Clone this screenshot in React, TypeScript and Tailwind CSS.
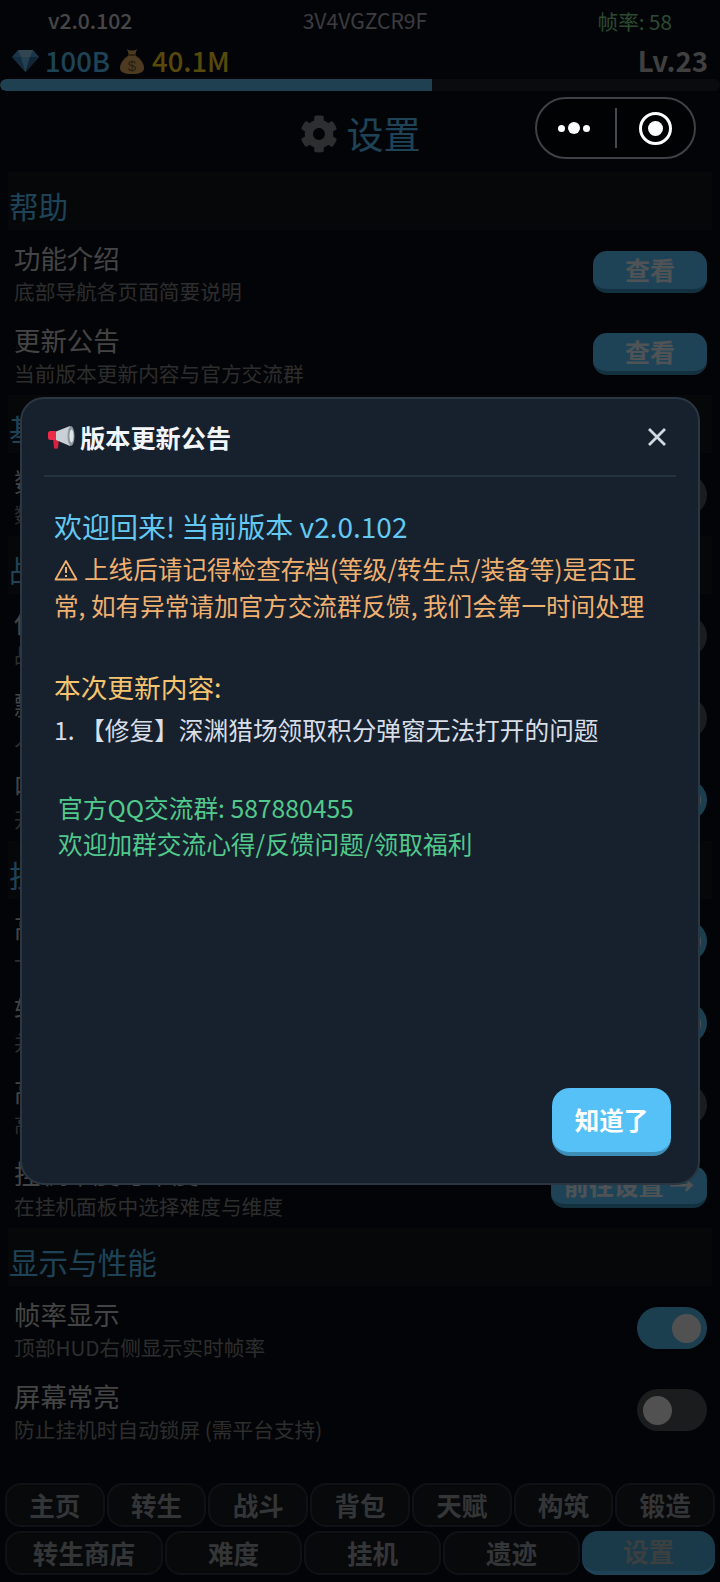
import { FaCog } from "react-icons/fa";

const FONT = "font-['Noto_Sans_CJK_SC','Noto_Sans',sans-serif]";

function Toggle({ on }: { on: boolean }) {
  return (
    <div className={`w-[70px] h-[42px] rounded-full flex items-center px-[6px] ${on ? "bg-[#52b4e2] justify-end" : "bg-[#4a5058] justify-start"}`}>
      <div className="w-[29px] h-[29px] rounded-full bg-[#e8e8e8]" />
    </div>
  );
}

function Btn({ label, wide }: { label: string; wide?: boolean }) {
  return (
    <div className={`h-[42px] rounded-[14px] bg-[#56c1f7] border-b-[4px] border-[#3a8db8] flex items-center justify-center text-[24.96px] font-bold text-[#e4eef2] ${wide ? "w-[156px]" : "w-[114px]"}`}>
      {label}
    </div>
  );
}

type Row = { title: string; sub: string; toggle?: boolean; btn?: string };

function SettingRow({ r }: { r: Row }) {
  return (
    <div className="h-[70px] pl-[14px] pr-[13px] flex justify-between items-start">
      <div className="flex flex-col -mt-[2px]">
        <div className="text-[26.4px] leading-[36px] text-[#c4c4c4]">{r.title}</div>
        <div className="text-[20.7px] leading-[30px] text-[#808080]">{r.sub}</div>
      </div>
      <div className="mt-[9px] flex shrink-0">
        {r.btn ? <Btn label={r.btn} wide={r.btn.length > 2} /> : <Toggle on={!!r.toggle} />}
      </div>
    </div>
  );
}

function Section({ title, rows }: { title: string; rows: Row[] }) {
  return (
    <div className="flex flex-col mb-[1px]">
      <div className="h-[58px] mx-[8px] pl-[1px] pt-[11px] bg-[#10141b] flex items-center text-[29.6px] text-[#56c1f7]">{title}</div>
      <div className="flex flex-col gap-[12px] pt-[12px]">
        {rows.map((r) => (
          <SettingRow key={r.title} r={r} />
        ))}
      </div>
    </div>
  );
}

const sections: { title: string; rows: Row[] }[] = [
  {
    title: "帮助",
    rows: [
      { title: "功能介绍", sub: "底部导航各页面简要说明", btn: "查看" },
      { title: "更新公告", sub: "当前版本更新内容与官方交流群", btn: "查看" },
    ],
  },
  { title: "基础设置", rows: [{ title: "数字格式", sub: "数值显示为缩写", toggle: false }] },
  {
    title: "战斗设置",
    rows: [
      { title: "伤害显示", sub: "战斗中显示伤害数字", toggle: false },
      { title: "飘字效果", sub: "入场时显示飘字动画", toggle: false },
      { title: "叫阵提示", sub: "开启后显示战斗提示", toggle: true },
    ],
  },
  {
    title: "挂机设置",
    rows: [
      { title: "高级挂机", sub: "一键开启自动战斗", toggle: true },
      { title: "转生提示", sub: "并在转生时发出提醒", toggle: true },
      { title: "高速模式", sub: "高速模式下跳过动画", toggle: false },
      { title: "挂机难度与维度", sub: "在挂机面板中选择难度与维度", btn: "前往设置 →" },
    ],
  },
  {
    title: "显示与性能",
    rows: [
      { title: "帧率显示", sub: "顶部HUD右侧显示实时帧率", toggle: true },
      { title: "屏幕常亮", sub: "防止挂机时自动锁屏 (需平台支持)", toggle: false },
    ],
  },
];

const nav1 = ["主页", "转生", "战斗", "背包", "天赋", "构筑", "锻造"];
const nav2 = ["转生商店", "难度", "挂机", "遗迹", "设置"];

function NavBtn({ label, active, cls }: { label: string; active?: boolean; cls: string }) {
  return (
    <div
      className={`${cls} h-[44px] rounded-[16px] flex items-center justify-center text-[25.6px] font-bold ${
        active ? "bg-[#4aa6d4] border-b-[4px] border-[#56c1f7] text-[#a8b4b8]" : "bg-[#141a22] border-[2px] border-[#2a323c] text-[#94979a]"
      }`}
    >
      {label}
    </div>
  );
}

function Diamond() {
  return (
    <svg width="27" height="22" viewBox="0 0 27 22" className="shrink-0">
      <path d="M6 0H21L27 7L13.5 22L0 7Z" fill="#4f9ad0" />
      <path d="M6 0L9 7H18L21 0Z" fill="#8cc6ee" />
      <path d="M0 7H9L13.5 22Z" fill="#3b7fb4" />
      <path d="M9 7H18L13.5 22Z" fill="#6bb2e4" />
      <path d="M18 7H27L13.5 22Z" fill="#2f6a9c" />
    </svg>
  );
}

function Bag() {
  return (
    <svg width="26" height="26" viewBox="0 0 26 26" className="shrink-0">
      <path d="M8 1C10 3 16 3 18 1L16 7H10Z" fill="#d9a860" />
      <path d="M9.5 7.5H16.5C22 11 25 16 25 20C25 24 21 26 13 26C5 26 1 24 1 20C1 16 4 11 9.5 7.5Z" fill="#d9a860" />
      <rect x="9" y="6" width="8" height="2" fill="#8a6530" />
      <text x="13" y="23" textAnchor="middle" fontSize="15" fill="#7a5a2c" fontFamily="Liberation Sans, sans-serif">$</text>
    </svg>
  );
}

function Megaphone() {
  return (
    <svg width="27" height="24" viewBox="0 0 27 24">
      <path d="M5 13H11L10 23C10 24 6 24 6 23Z" fill="#d8213f" />
      <rect x="0" y="6" width="9" height="9" rx="2.5" fill="#ee2b47" />
      <path d="M8 6.5L22 1V21L8 15Z" fill="#c9d1d6" />
      <ellipse cx="23" cy="11" rx="3.5" ry="10" fill="#8d989f" />
      <ellipse cx="23.5" cy="11" rx="2" ry="6.5" fill="#dfe5e8" />
    </svg>
  );
}

export default function App() {
  return (
    <div className={`relative w-[720px] h-[1582px] overflow-hidden bg-[#0b0e14] ${FONT}`}>
      {/* page */}
      <div className="flex flex-col h-full">
        <div className="h-[42px] px-[48px] flex items-center justify-between text-[21.12px]">
          <span className="font-medium text-[#c8c8d0]">v2.0.102</span>
          <span className="text-[#a8a8b8]">3V4VGZCR9F</span>
          <span className="text-[#7fd090] text-[20.6px]">帧率: 58</span>
        </div>
        <div className="h-[37px] pl-[12px] pr-[12px] flex items-center justify-between">
          <div className="flex items-center text-[27.4px] font-medium">
            <Diamond />
            <span className="ml-[6px] text-[#56c1f7]">100B</span>
            <span className="ml-[9px]"><Bag /></span>
            <span className="ml-[7px] text-[#f5d020]">40.1M</span>
          </div>
          <span className="text-[27.6px] font-bold text-[#b8b8b8]">Lv.23</span>
        </div>
        <div className="h-[12px] bg-[#1d2229] rounded-full overflow-hidden">
          <div className="h-full w-[432px] bg-[#56b8e4] rounded-l-full" />
        </div>
        <div className="h-[81px] pt-[5px] flex items-center justify-center">
          <FaCog className="text-[38px] text-[#7f8488]" />
          <span className="ml-[9px] text-[37px] text-[#56c1f7]">设置</span>
        </div>
        {sections.map((s) => (
          <Section key={s.title} title={s.title} rows={s.rows} />
        ))}
        <div className="mt-auto pb-[7px] flex flex-col gap-[4px] px-[5px]">
          <div className="flex gap-[2px]">
            {nav1.map((n) => (
              <NavBtn key={n} label={n} cls="flex-1" />
            ))}
          </div>
          <div className="flex gap-[2px]">
            {nav2.map((n, i) => (
              <NavBtn key={n} label={n} active={n === "设置"} cls={i === 0 ? "w-[158px]" : "flex-1"} />
            ))}
          </div>
        </div>
      </div>

      {/* dim overlay */}
      <div className="absolute inset-0 bg-black/65" />

      {/* capsule */}
      <div className="absolute left-[535px] top-[97px] w-[161px] h-[62px] rounded-full border-[2px] border-[#3f4144] bg-black/40 flex items-center">
        <div className="w-[78px] pr-[4px] flex items-center justify-center gap-[3px]">
          <span className="w-[7px] h-[7px] rounded-full bg-white" />
          <span className="w-[12px] h-[12px] rounded-full bg-white" />
          <span className="w-[7px] h-[7px] rounded-full bg-white" />
        </div>
        <div className="w-[2px] h-[40px] bg-[#46484b]" />
        <div className="flex-1 flex items-center justify-center">
          <div className="w-[33px] h-[33px] rounded-full border-[3px] border-white flex items-center justify-center">
            <div className="w-[15px] h-[15px] rounded-full bg-white" />
          </div>
        </div>
      </div>

      {/* modal */}
      <div className="absolute left-[20px] top-[397px] w-[680px] h-[788px] rounded-[24px] bg-[#17212d] border-[2px] border-[#2a3642] flex flex-col">
        <div className="mx-[22px] h-[78px] shrink-0 border-b-[2px] border-[#253240] flex items-center justify-between">
          <div className="flex items-center pl-[4px] pt-[1px]">
            <Megaphone />
            <span className="ml-[5px] text-[25.2px] font-bold text-[#f2f6fa]">版本更新公告</span>
          </div>
          <svg width="20" height="20" viewBox="0 0 20 20" className="mr-[9px]">
            <path d="M2 2L18 18M18 2L2 18" stroke="#d0d8e0" strokeWidth="2.8" fill="none" />
          </svg>
        </div>
        <div className="flex-1 pl-[32px] pr-[30px] pt-[28px]">
          <div className="text-[28px] leading-[42px] text-[#63c8f2]">欢迎回来! 当前版本 v2.0.102</div>
          <div className="mt-[3px] w-[600px] text-[24.6px] leading-[37px] text-[#f0b070]">
            <svg width="24" height="22" viewBox="0 0 24 22" className="inline-block align-[-2px] mr-[6px]">
              <path d="M12 2L22.5 20.5H1.5Z" fill="none" stroke="#f0b070" strokeWidth="1.8" strokeLinejoin="round" />
              <path d="M12 8V14M12 16V18" stroke="#f0b070" strokeWidth="2" />
            </svg>
            上线后请记得检查存档(等级/转生点/装备等)是否正常, 如有异常请加官方交流群反馈, 我们会第一时间处理
          </div>
          <div className="mt-[43px] text-[26.7px] leading-[40px] text-[#f5c46e]">本次更新内容:</div>
          <div className="mt-[4px] text-[24.7px] leading-[37px] text-[#d8dee8]">1. 【修复】深渊猎场领取积分弹窗无法打开的问题</div>
          <div className="mt-[41px] pl-[4px] text-[24.7px] leading-[36px] text-[#52c98c]">
            <div>官方QQ交流群: 587880455</div>
            <div>欢迎加群交流心得/反馈问题/领取福利</div>
          </div>
        </div>
        <div className="flex justify-end pr-[27px] pb-[27px]">
          <div className="w-[119px] h-[68px] rounded-[18px] bg-[#56c1f7] border-b-[4px] border-[#3d8fb8] flex items-center justify-center text-[24.5px] font-bold text-white">
            知道了
          </div>
        </div>
      </div>
    </div>
  );
}
